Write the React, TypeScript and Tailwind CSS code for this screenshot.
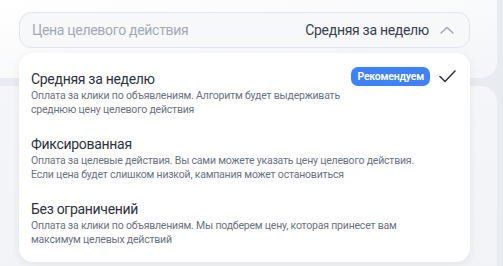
const options = [
  {
    title: "Средняя за неделю",
    desc: ["Оплата за клики по объявлениям. Алгоритм будет выдерживать", "среднюю цену целевого действия"],
    selected: true,
  },
  {
    title: "Фиксированная",
    desc: ["Оплата за целевые действия. Вы сами можете указать цену целевого действия.", "Если цена будет слишком низкой, кампания может остановиться"],
  },
  {
    title: "Без ограничений",
    desc: ["Оплата за клики по объявлениям. Мы подберем цену, которая принесет вам", "максимум целевых действий"],
  },
];

const App = () => {
  return (
    <div className="relative w-[503px] h-[266px] overflow-hidden bg-[#e8ebf0] flex flex-col font-['Roboto','Noto_Sans',sans-serif]">
      <div className="h-[78px] w-[497px] shrink-0 rounded-br-[16px] bg-gradient-to-br from-white to-[#f4f5f8] pt-[12px] pl-[19px]">
        <div className="w-[451px] h-[36px] rounded-[12px] border border-[#e2e5eb] bg-[#f7f8fa] flex items-center pl-[12px] pr-[15px]">
          <span className="text-[14px] tracking-[-0.3px] text-[#a3a8b5] whitespace-nowrap">Цена целевого действия</span>
          <span className="ml-auto text-[14px] tracking-[-0.3px] text-[#3a3f4d] whitespace-nowrap">Средняя за неделю</span>
          <svg width="14" height="8" viewBox="0 0 14 8" className="ml-[11px]" fill="none">
            <path d="M1 7 L7 1.5 L13 7" stroke="#a0a5b2" strokeWidth="1.4" strokeLinecap="round" strokeLinejoin="round" />
          </svg>
        </div>
      </div>
      <div className="mt-[8px] w-[497px] flex-1 rounded-tr-[16px] bg-gradient-to-b from-[#f5f6f9] to-[#f2f3f6]" />

      <div className="absolute left-[19px] top-[53px] w-[451px] h-[209px] rounded-[14px] bg-white shadow-[0_2px_8px_rgba(40,50,80,0.08)] pt-[16px] pl-[12px] pr-[14px] flex flex-col gap-[17px]">
        {options.map((o) => (
          <div key={o.title} className="flex items-start">
            <div className="flex flex-col whitespace-nowrap">
              <span className="text-[14px] tracking-[-0.3px] leading-[20px] text-[#2d3240]">{o.title}</span>
              <span className="text-[10.5px] tracking-[-0.2px] leading-[14px] text-[#6c7180]">{o.desc[0]}</span>
              <span className="text-[10.5px] tracking-[-0.2px] leading-[14px] text-[#6c7180]">{o.desc[1]}</span>
            </div>
            {o.selected && (
              <div className="ml-auto flex items-center gap-[9px] mt-[-2px]">
                <span className="h-[19px] px-[6px] rounded-[7px] bg-[#3f82f6] text-white text-[10.5px] tracking-[-0.2px] font-semibold leading-[19px]">
                  Рекомендуем
                </span>
                <svg width="17" height="13" viewBox="0 0 17 13" fill="none">
                  <path d="M1 6.5 L6 11.5 L16 1" stroke="#2d3240" strokeWidth="1.5" strokeLinecap="round" strokeLinejoin="round" />
                </svg>
              </div>
            )}
          </div>
        ))}
      </div>
    </div>
  );
};

export default App;
